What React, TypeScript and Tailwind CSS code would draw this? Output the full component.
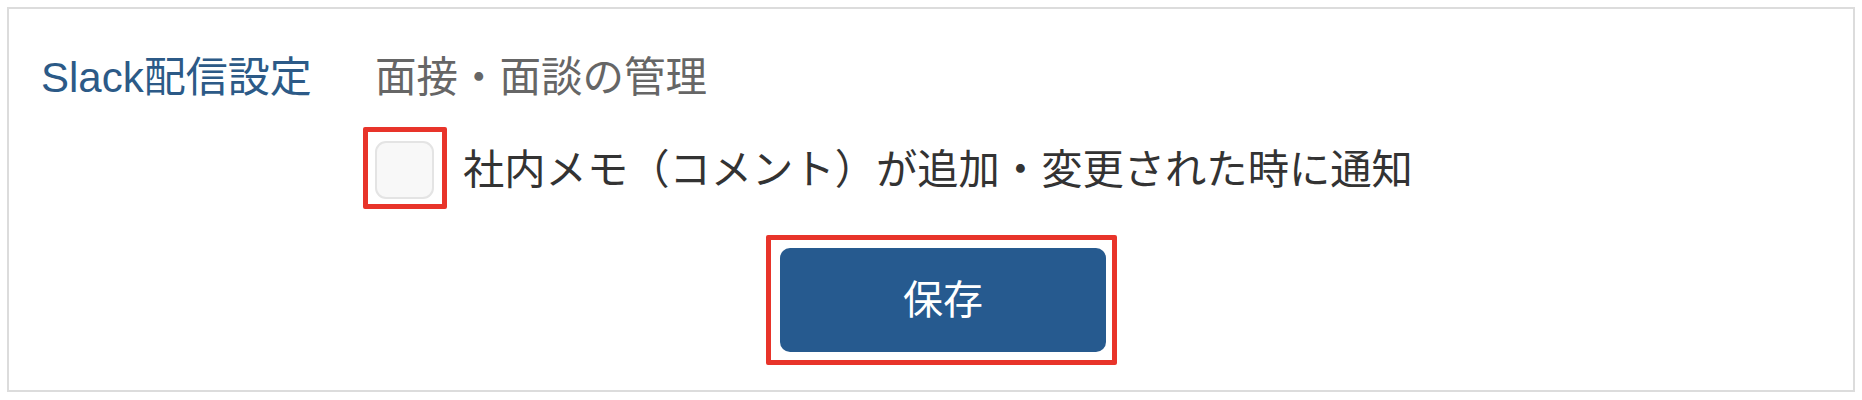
import { useState } from "react";

const FONT = '"Liberation Sans", "Noto Sans CJK JP", sans-serif';

export default function App() {
  const [checked, setChecked] = useState(false);

  return (
    <div className="h-[400px] w-full bg-white p-[7px]" style={{ fontFamily: FONT }}>
      <div className="flex h-[385px] border-2 border-[#dcdcdc] pl-[32px] pt-[38px]">
        <div className="w-[334px] shrink-0 text-[42px] leading-[62px] text-[#2c5a87]">
          Slack配信設定
        </div>

        <div className="flex flex-col">
          <p className="text-[41.5px] leading-[62px] text-[#666666]">面接・面談の管理</p>

          <label className="mt-[32px] flex cursor-pointer items-center">
            <span className="relative block h-[58px] w-[59px] shrink-0">
              <input
                type="checkbox"
                checked={checked}
                onChange={(e) => setChecked(e.target.checked)}
                className="peer sr-only"
              />
              <span className="block h-full w-full rounded-[11px] border-2 border-[#e4e4e4] bg-[#f8f8f8] peer-checked:bg-[#265a8f]" />
              <span className="pointer-events-none absolute -left-[12px] -top-[14px] h-[82px] w-[84px] rounded-[2px] border-[5px] border-[#e8342a]" />
            </span>
            <span className="ml-[29px] whitespace-nowrap text-[41.3px] leading-[58px] text-[#333333]">
              社内メモ（コメント）が追加・変更された時に通知
            </span>
          </label>

          <div className="relative ml-[405px] mt-[49px] w-[326px]">
            <button
              type="button"
              className="h-[104px] w-[326px] rounded-[10px] bg-[#265a8f] text-[40px] text-white"
            >
              保存
            </button>
            <span className="pointer-events-none absolute -left-[14px] -top-[13px] h-[130px] w-[351px] rounded-[2px] border-[5px] border-[#e8342a]" />
          </div>
        </div>
      </div>
    </div>
  );
}
